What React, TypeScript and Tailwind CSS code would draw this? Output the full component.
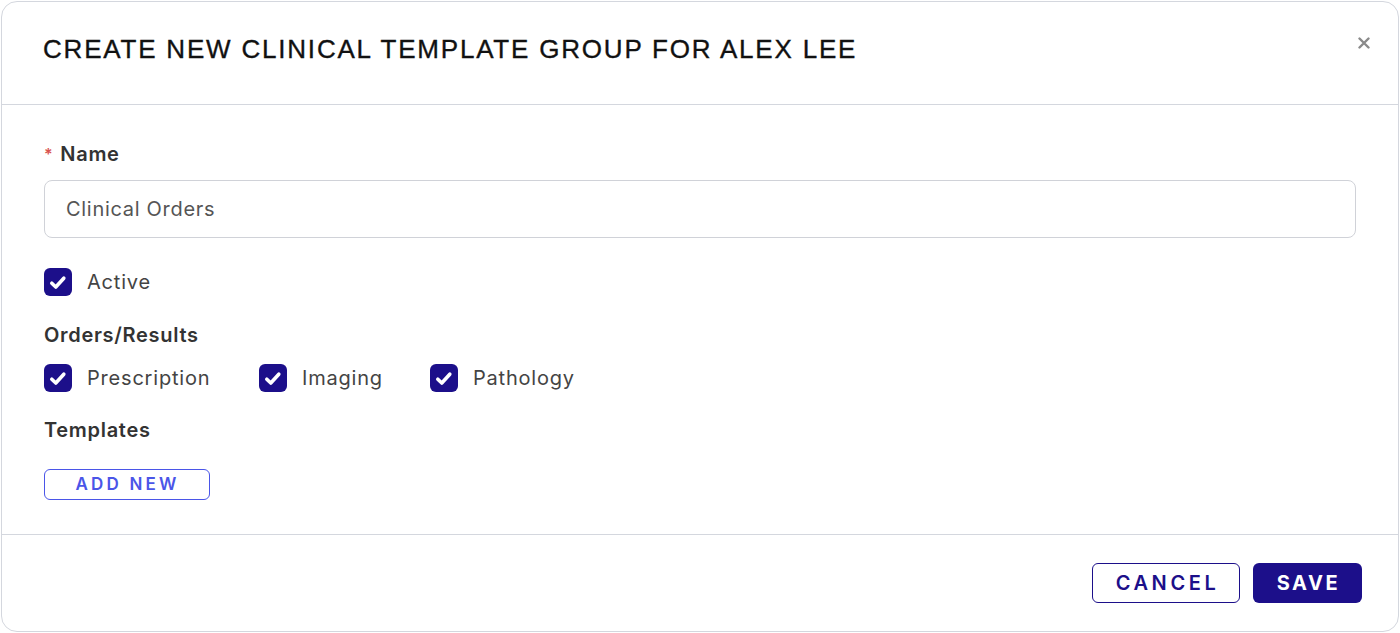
import React from "react";

function Check({ label }: { label: string }) {
  return (
    <div className="flex items-center gap-[15px]">
      <span className="flex h-[28px] w-[28px] items-center justify-center rounded-[6px] bg-[#1c0f8a]">
        <svg width="28" height="28" viewBox="0 0 28 28" fill="none">
          <path d="M7.8 15.2 L11.8 19 L19.8 10.2" stroke="white" strokeWidth="3.6" strokeLinecap="round" strokeLinejoin="round" />
        </svg>
      </span>
      <span className="text-[20px] tracking-[0.8px] text-[#444] leading-none">{label}</span>
    </div>
  );
}

export default function App() {
  return (
    <div className="w-[1400px] h-[633px] bg-white p-px" style={{ fontFamily: "Inter, 'Noto Sans', sans-serif" }}>
      <div className="h-[631px] w-[1398px] rounded-2xl border border-[#d4d7de] flex flex-col bg-white">
        <div className="h-[103px] shrink-0 border-b border-[#d4d7de] pl-[41px] pr-[28px] flex items-center justify-between">
          <h1
            className="mb-[7px] text-[26px] text-[#111] tracking-[1.8px] [-webkit-text-stroke:0.35px_#111]"
            style={{ fontFamily: "'Liberation Sans', Arial, sans-serif" }}
          >
            CREATE NEW CLINICAL TEMPLATE GROUP FOR ALEX LEE
          </h1>
          <span className="mb-[21px] text-[#8a8a8a]">
            <svg width="12" height="12" viewBox="0 0 12 12">
              <path d="M1.5 1.5 L10.5 10.5 M10.5 1.5 L1.5 10.5" stroke="currentColor" strokeWidth="2.4" strokeLinecap="round" />
            </svg>
          </span>
        </div>
        <div className="flex-1 pl-[42px] pr-[42px] pt-[37px]">
          <div className="h-[24px] flex items-center text-[20px] tracking-[0.7px] font-semibold text-[#333]">
            <span className="text-[#d9534f] mr-[7px] text-[16px]">*</span>Name
          </div>
          <div className="mt-[14px] h-[58px] rounded-[8px] border border-[#d0d2d8] flex items-center px-[21px] text-[20px] tracking-[0.7px] text-[#555]">
            Clinical Orders
          </div>
          <div className="mt-[30px]">
            <Check label="Active" />
          </div>
          <div className="mt-[27px] h-[24px] flex items-center text-[20px] tracking-[0.7px] font-semibold text-[#333]">Orders/Results</div>
          <div className="mt-[17px] flex items-center">
            <div className="w-[215px]"><Check label="Prescription" /></div>
            <div className="w-[171px]"><Check label="Imaging" /></div>
            <Check label="Pathology" />
          </div>
          <div className="mt-[26px] h-[24px] flex items-center text-[20px] tracking-[0.7px] font-semibold text-[#333]">Templates</div>
          <button className="mt-[27px] h-[31px] w-[166px] rounded-[6px] border border-[#4a55e8] text-[#4a55e8] text-[17px] font-semibold tracking-[3.2px] pl-[1px] flex items-center justify-center">
            ADD NEW
          </button>
        </div>
        <div className="h-[97px] shrink-0 border-t border-[#d4d7de] flex items-center justify-end gap-[13px] pr-[36px]">
          <button className="h-[40px] w-[148px] rounded-[6px] border border-[#1c0f8a] text-[#1c0f8a] text-[20px] font-semibold tracking-[3.6px] pl-[3px] flex items-center justify-center bg-white">
            CANCEL
          </button>
          <button className="h-[40px] w-[109px] rounded-[6px] bg-[#1c0f8a] text-white text-[20px] font-bold tracking-[2.6px] pl-[2px] flex items-center justify-center">
            SAVE
          </button>
        </div>
      </div>
    </div>
  );
}
